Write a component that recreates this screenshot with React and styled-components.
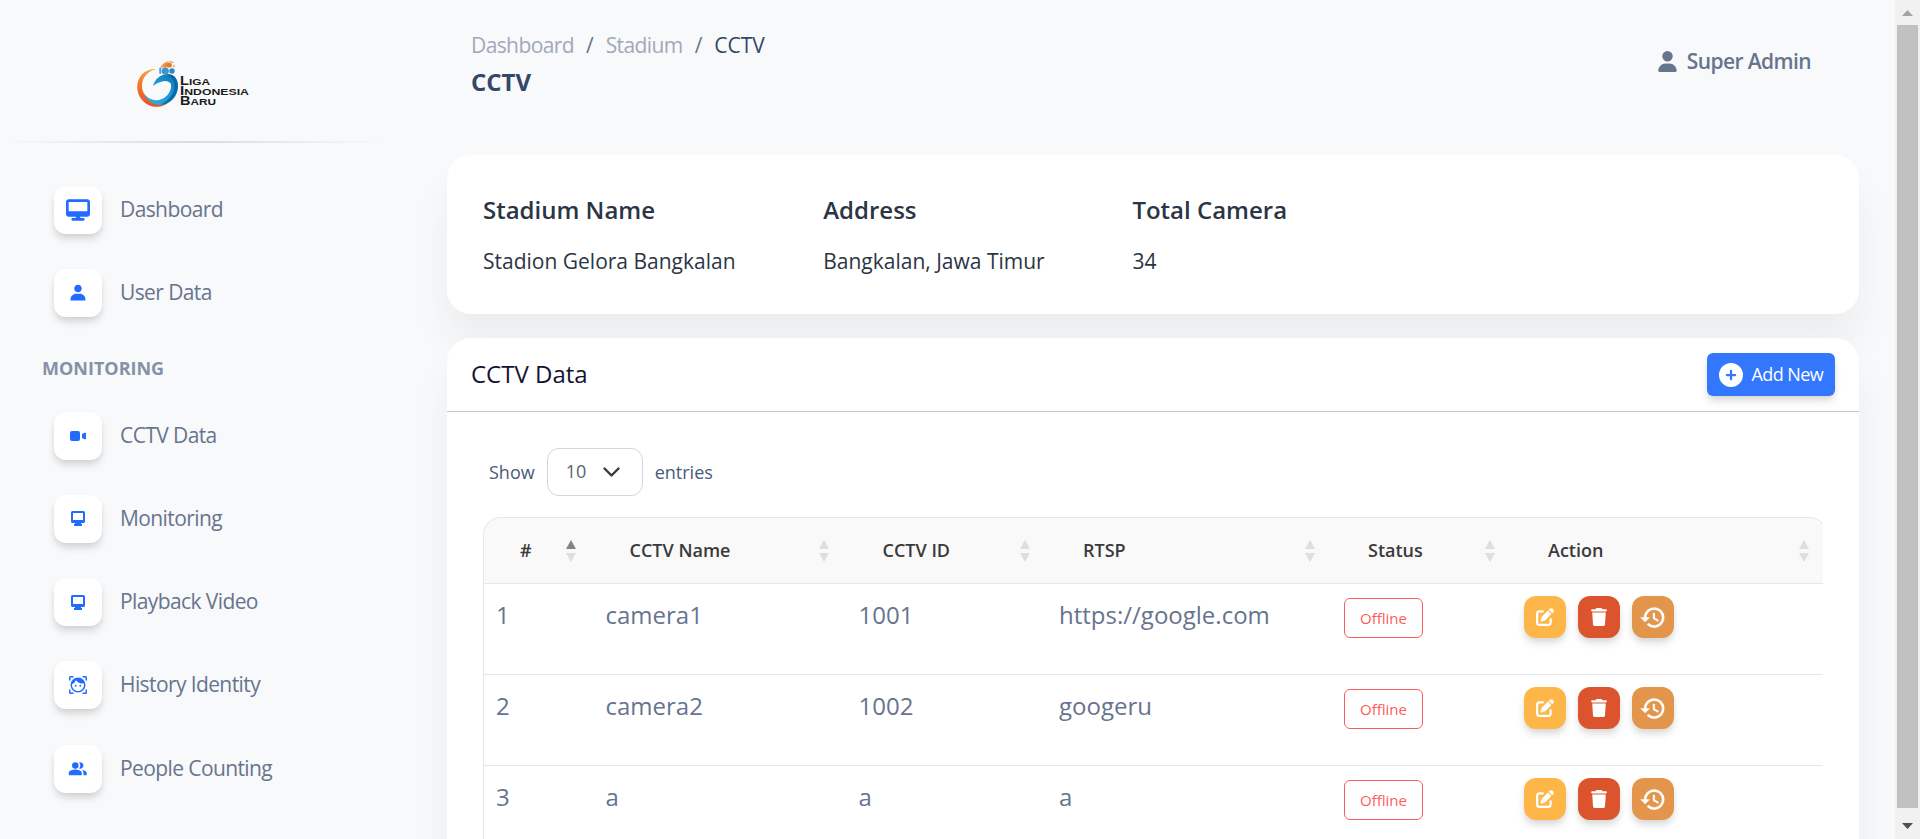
import React from "react";
import styled, { createGlobalStyle } from "styled-components";
import { FaDesktop, FaUser, FaCirclePlus, FaPenToSquare, FaTrash } from "react-icons/fa6";
import { BiSolidUser } from "react-icons/bi";
import { MdPeopleAlt } from "react-icons/md";

const Global = createGlobalStyle`
  *, *::before, *::after { box-sizing: border-box; }
  body {
    margin: 0;
    overflow: hidden;
    background: #f8f9fb;
    font-family: "Open Sans", "Liberation Sans", sans-serif;
    color: #67748e;
  }
`;

const Screen = styled.div`
  display: flex;
  height: 839px;
  overflow: hidden;
`;

const Sidebar = styled.aside`
  width: 399px;
  flex: none;
`;

const Brand = styled.div`
  display: flex;
  padding: 60px 0 0 136px;
  height: 141px;
`;

const Divider = styled.div`
  height: 2px;
  width: 387px;
  background: linear-gradient(90deg, transparent, rgba(0, 0, 0, 0.12), transparent);
`;

const Nav = styled.nav`
  padding: 43px 0 0 54px;
  display: flex;
  flex-direction: column;
  gap: 35.25px;
`;

const NavItem = styled.a`
  display: flex;
  align-items: center;
  gap: 18px;
  height: 48px;
  font-size: 21px;
  line-height: 46px;
  letter-spacing: -0.6px;
  color: #67748e;
`;

const NavLabel = styled.span`
  height: 48px;
`;

const Tile = styled.span`
  width: 48px;
  height: 48px;
  flex: none;
  border-radius: 12px;
  background: #fff;
  color: #216bff;
  display: flex;
  align-items: center;
  justify-content: center;
  box-shadow: 0 6px 9px -1px rgba(20, 20, 20, 0.12), 0 3px 6px -1px rgba(20, 20, 20, 0.07);
  svg { display: block; }
`;

const SectionTitle = styled.h6`
  margin: 3px 0 -3.1px -12px;
  height: 24px;
  font-size: 18px;
  line-height: 24px;
  font-weight: 700;
  color: #8591a6;
`;

const Main = styled.main`
  flex: 1;
  padding: 0 36px 0 48px;
  display: flex;
  flex-direction: column;
`;

const Topbar = styled.header`
  display: flex;
  justify-content: space-between;
  height: 155px;
  padding: 30px 48px 0 24px;
  flex: none;
`;

const Crumbs = styled.div`
  display: flex;
  gap: 12px;
  font-size: 21px;
  line-height: 31px;
  color: #344767;
`;

const Crumb = styled.span`
  letter-spacing: ${(p) => (p.$current ? "0" : "-0.6px")};
  color: ${(p) => (p.$current ? "#344767" : "#a0a9b9")};
`;

const Slash = styled.span`
  color: #67748e;
`;

const PageTitle = styled.h1`
  margin: 4px 0 0;
  font-size: 24px;
  line-height: 33px;
  font-weight: 700;
  color: #344767;
`;

const Account = styled.div`
  display: flex;
  align-items: center;
  gap: 9px;
  height: 62px;
  font-size: 21px;
  font-weight: 600;
  letter-spacing: -0.6px;
  color: #67748e;
`;

const Card = styled.section`
  background: #fff;
  border-radius: ${(p) => (p.$open ? "24px 24px 0 0" : "24px")};
  box-shadow: 0 30px 40.5px rgba(0, 0, 0, 0.05);
  flex: none;
`;

const Facts = styled(Card)`
  display: flex;
  gap: 87.7px;
  height: 159px;
  padding: 36px;
  margin-bottom: 24px;
  color: #2b3544;
`;

const FactName = styled.h5`
  margin: 2px 0 17px;
  font-size: 24px;
  line-height: 33px;
  font-weight: 600;
`;

const FactValue = styled.p`
  margin: 0;
  font-size: 21px;
  line-height: 36px;
`;

const DataCard = styled(Card)`
  height: 540px;
`;

const CardHead = styled.div`
  height: 74px;
  border-bottom: 1px solid #c4c6c9;
  display: flex;
  align-items: flex-start;
  justify-content: space-between;
  padding: 15px 24px 0;
  font-size: 24px;
  line-height: 41px;
  color: #141432;
`;

const AddButton = styled.button`
  display: flex;
  align-items: center;
  gap: 8.5px;
  width: 128px;
  height: 43px;
  padding: 0 0 0 12px;
  border: 0;
  border-radius: 6px;
  background: #3377ff;
  color: #fff;
  font: 400 18px "Open Sans", sans-serif;
  letter-spacing: -0.6px;
  white-space: nowrap;
  box-shadow: 0 6px 9px -1px rgba(20, 20, 20, 0.12), 0 3px 6px -1px rgba(20, 20, 20, 0.07);
`;

const AddLabel = styled.span`
  padding-bottom: 2px;
`;

const Length = styled.label`
  display: flex;
  align-items: center;
  gap: 12px;
  padding: 36px 0 21px 42px;
  font-size: 18px;
  line-height: 48px;
  color: #4a5a7a;
`;

const Select = styled.span`
  width: 96px;
  height: 48px;
  border: 1px solid #d2d6da;
  border-radius: 12px;
  display: flex;
  align-items: center;
  justify-content: space-between;
  padding: 0 22px 2px 18px;
  color: #5c6370;
  svg { margin-top: 2px; }
`;

const TableFrame = styled.div`
  margin-left: 36px;
  width: 1340px;
  overflow: hidden;
`;

const Table = styled.div`
  width: 1344px;
  border: 1px solid #e3e7eb;
  border-bottom: 0;
  border-radius: 18px 18px 0 0;
  overflow: hidden;
`;

const Row = styled.div`
  display: grid;
  grid-template-columns: 109.5px 253px 200.5px 285px 180px 314px;
  height: ${(p) => (p.$head ? 66 : 91)}px;
  border-bottom: 1px solid #e3e7eb;
  background: ${(p) => (p.$head ? "#f9f9f9" : "#fff")};
`;

const HeadCell = styled.div`
  display: flex;
  align-items: center;
  justify-content: space-between;
  padding: 0 17.5px 0 36px;
  font-size: 18px;
  font-weight: 600;
  color: #3a3a3a;
`;

const HeadLabel = styled.span`
  padding-bottom: 2px;
`;

const Cell = styled.div`
  padding: 12px 12px 0;
  font-size: 24px;
  line-height: 38px;
  color: #67748e;
`;

const Badge = styled.span`
  display: block;
  width: 79px;
  height: 40px;
  margin-top: 2px;
  border: 1px solid #fd5c5e;
  border-radius: 6px;
  color: #fd5c5e;
  font-size: 15px;
  line-height: 39px;
  text-align: center;
`;

const Actions = styled.div`
  display: flex;
  gap: 12px;
`;

const ActionButton = styled.button`
  width: 42px;
  height: 42px;
  padding: 0;
  border: 0;
  border-radius: 12px;
  background: ${(p) => p.$color};
  color: #fff;
  display: flex;
  align-items: center;
  justify-content: center;
  box-shadow: 0 6px 9px -1px rgba(20, 20, 20, 0.12), 0 3px 6px -1px rgba(20, 20, 20, 0.07);
`;

const Scrollbar = styled.div`
  width: 25px;
  flex: none;
  background: #f1f1f1;
  display: flex;
  flex-direction: column;
  align-items: center;
`;

const ScrollArrow = styled.div`
  height: ${(p) => p.$h}px;
  padding-top: ${(p) => p.$pad}px;
  display: flex;
  align-items: center;
`;

const Thumb = styled.div`
  width: 21px;
  flex: 1;
  background: #c1c1c1;
`;

const Logo = () => (
  <svg width="116" height="49" viewBox="0 0 116 49">
    <defs>
      <linearGradient id="orange" x1="0" y1="0" x2="0" y2="1">
        <stop offset="0" stopColor="#f7a04a" />
        <stop offset="0.5" stopColor="#f0702c" />
        <stop offset="1" stopColor="#e8512a" />
      </linearGradient>
      <linearGradient id="blue" x1="0" y1="1" x2="1" y2="0">
        <stop offset="0" stopColor="#35b0e5" />
        <stop offset="0.55" stopColor="#1a9ad6" />
        <stop offset="1" stopColor="#0f6cab" />
      </linearGradient>
    </defs>
    <path d="M20 9C8 9 1.300 17 1.300 27C1.300 38 10 46.800 21 46.800C26 46.800 30 45 33 42C17 44 6 37 6 26C6 17 12 11 20 9Z" fill="url(#orange)" />
    <path d="M17 26C19 18 27 12.500 35 14.500C40 16 42 21 42 26C42 36 35 44 25 45C17 45 10 40 8 34C12 39 18 41 23 40C31 38 36 31 35 24C32 18.500 23 21 17 26Z" fill="url(#blue)" />
    <path d="M36 15C41 18 42 23 41.700 28C40 38 33 44 25 44.700C33 40 38.500 34 38.500 26C38.500 21 37 18 32 16Z" fill="#0b68a8" />
    <path d="M24.500 8C25.500 4.500 29 1.800 33 1.300L31 4L27 7.500Z" fill="#f19a4f" />
    <circle cx="29.500" cy="5.500" r="2.200" fill="#ef8b3c" />
    <circle cx="33.300" cy="5" r="2.600" fill="#e97a2c" />
    <path d="M33 1.500C35.500 1 37.500 1.500 38.500 3L35 2.500ZM36.500 7L38.500 4L38.500 7.500Z" fill="#f19a4f" />
    <rect x="23.300" y="7.500" width="2" height="6.500" rx="1" fill="#4d9fd0" />
    <circle cx="29.300" cy="11" r="3.600" fill="#3d93ca" />
    <circle cx="36" cy="11" r="2.700" fill="#2b88c4" />
    <g fill="#1c1a19" fontFamily="'Liberation Sans', sans-serif" fontWeight="700">
      <text x="44" y="25" fontSize="12" textLength="30" lengthAdjust="spacingAndGlyphs">L<tspan fontSize="9.800">IGA</tspan></text>
      <text x="44" y="35" fontSize="12" textLength="69" lengthAdjust="spacingAndGlyphs">I<tspan fontSize="9.800">NDONESIA</tspan></text>
      <text x="44" y="45" fontSize="12" textLength="36" lengthAdjust="spacingAndGlyphs">B<tspan fontSize="9.800">ARU</tspan></text>
    </g>
  </svg>
);

const VideoIcon = () => (
  <svg width="16" height="10" viewBox="0 0 16 10" fill="currentColor">
    <rect width="10" height="10" rx="2" />
    <path d="M12 3L14.500 1.800H15.400A.6.6 0 0 1 16 2.400V7.600A.6.6 0 0 1 15.400 8.200H14.500L12 7Z" />
  </svg>
);

const MonitorIcon = () => (
  <svg width="14" height="15" viewBox="0 0 14 15" fill="currentColor">
    <path fillRule="evenodd" d="M1.500 0H12.500A1.500 1.500 0 0 1 14 1.500V10.500A1.500 1.500 0 0 1 12.500 12H10V13H11V15H3V13H4V12H1.500A1.500 1.500 0 0 1 0 10.500V1.500A1.500 1.500 0 0 1 1.500 0ZM2 2V9H12V2Z" />
  </svg>
);

const FaceIcon = () => (
  <svg width="18" height="18" viewBox="0 0 24 24" fill="currentColor">
    <path d="M0 6V2A2 2 0 0 1 2 0H6V2H2V6ZM18 0H22A2 2 0 0 1 24 2V6H22V2H18ZM24 18V22A2 2 0 0 1 22 24H18V22H22V18ZM6 24H2A2 2 0 0 1 0 22V18H2V22H6Z" />
    <path d="M9 11.750A1.250 1.250 0 0 0 7.750 13A1.250 1.250 0 0 0 9 14.250A1.250 1.250 0 0 0 10.250 13A1.250 1.250 0 0 0 9 11.750M15 11.750A1.250 1.250 0 0 0 13.750 13A1.250 1.250 0 0 0 15 14.250A1.250 1.250 0 0 0 16.250 13A1.250 1.250 0 0 0 15 11.750M12 2A10 10 0 0 0 2 12A10 10 0 0 0 12 22A10 10 0 0 0 22 12A10 10 0 0 0 12 2M12 20C7.590 20 4 16.410 4 12C4 11.710 4 11.420 4.050 11.140C6.410 10.090 8.280 8.160 9.260 5.770C11.070 8.330 14.050 10 17.420 10C18.200 10 18.950 9.910 19.670 9.740C19.880 10.450 20 11.210 20 12C20 16.410 16.410 20 12 20Z" />
  </svg>
);

const HistoryIcon = () => (
  <svg width="27" height="27" viewBox="0.400 0 24 24" fill="currentColor" stroke="currentColor" strokeWidth="0.350">
    <path d="M13 3a9 9 0 0 0-9 9H1l3.890 3.890.070.140L9 12H6c0-3.870 3.130-7 7-7s7 3.130 7 7-3.130 7-7 7c-1.930 0-3.680-.790-4.940-2.060l-1.420 1.420A8.954 8.954 0 0 0 13 21a9 9 0 0 0 0-18zm-1 5v5l4.280 2.540.720-1.210-3.500-2.080V8H12z" />
  </svg>
);

const SortIcon = ({ active }) => (
  <svg width="10" height="22" viewBox="0 0 10 22">
    <path d="M0 9L5 0L10 9Z" fill={active ? "#858585" : "#dedede"} />
    <path d="M0 13H10L5 22Z" fill="#dedede" />
  </svg>
);

const topItems = [
  ["Dashboard", <FaDesktop size={24} />],
  ["User Data", <BiSolidUser size={20} />],
];
const monitoringItems = [
  ["CCTV Data", <VideoIcon />],
  ["Monitoring", <MonitorIcon />],
  ["Playback Video", <MonitorIcon />],
  ["History Identity", <FaceIcon />],
  ["People Counting", <MdPeopleAlt size={19.5} />],
];
const facts = [
  ["Stadium Name", "Stadion Gelora Bangkalan"],
  ["Address", "Bangkalan, Jawa Timur"],
  ["Total Camera", "34"],
];
const columns = ["#", "CCTV Name", "CCTV ID", "RTSP", "Status", "Action"];
const cameras = [
  ["1", "camera1", "1001", "https://google.com"],
  ["2", "camera2", "1002", "googeru"],
  ["3", "a", "a", "a"],
];

const NavLink = ([label, icon]) => (
  <NavItem key={label}>
    <Tile>{icon}</Tile>
    <NavLabel>{label}</NavLabel>
  </NavItem>
);

export default function App() {
  return (
    <Screen>
      <Global />
      <Sidebar>
        <Brand><Logo /></Brand>
        <Divider />
        <Nav>
          {topItems.map(NavLink)}
          <SectionTitle>MONITORING</SectionTitle>
          {monitoringItems.map(NavLink)}
        </Nav>
      </Sidebar>
      <Main>
        <Topbar>
          <div>
            <Crumbs>
              <Crumb>Dashboard</Crumb>
              <Slash>/</Slash>
              <Crumb>Stadium</Crumb>
              <Slash>/</Slash>
              <Crumb $current>CCTV</Crumb>
            </Crumbs>
            <PageTitle>CCTV</PageTitle>
          </div>
          <Account><FaUser size={21} />Super Admin</Account>
        </Topbar>
        <Facts>
          {facts.map(([name, value]) => (
            <div key={name}>
              <FactName>{name}</FactName>
              <FactValue>{value}</FactValue>
            </div>
          ))}
        </Facts>
        <DataCard $open>
          <CardHead>
            CCTV Data
            <AddButton><FaCirclePlus size={24} /><AddLabel>Add New</AddLabel></AddButton>
          </CardHead>
          <Length>
            Show
            <Select>
              10
              <svg width="17" height="10" viewBox="0 0 17 10" fill="none" stroke="#343a40" strokeWidth="2.400" strokeLinecap="round" strokeLinejoin="round">
                <path d="M1.500 1.500L8.500 8.500L15.500 1.500" />
              </svg>
            </Select>
            entries
          </Length>
          <TableFrame>
            <Table>
              <Row $head>
                {columns.map((name, i) => (
                  <HeadCell key={name}><HeadLabel>{name}</HeadLabel><SortIcon active={i === 0} /></HeadCell>
                ))}
              </Row>
              {cameras.map((camera) => (
                <Row key={camera[0]}>
                  {camera.map((value, i) => <Cell key={i}>{value}</Cell>)}
                  <Cell><Badge>Offline</Badge></Cell>
                  <Cell>
                    <Actions>
                      <ActionButton $color="#ffb648"><FaPenToSquare size={18} /></ActionButton>
                      <ActionButton $color="#db542d"><FaTrash size={18} /></ActionButton>
                      <ActionButton $color="#e2954b"><HistoryIcon /></ActionButton>
                    </Actions>
                  </Cell>
                </Row>
              ))}
            </Table>
          </TableFrame>
        </DataCard>
      </Main>
      <Scrollbar>
        <ScrollArrow $h={25} $pad={1}>
          <svg width="11" height="6" viewBox="0 0 11 6"><path d="M0 6L5.500 0L11 6Z" fill="#a3a3a3" /></svg>
        </ScrollArrow>
        <Thumb />
        <ScrollArrow $h={31} $pad={5}>
          <svg width="11" height="6" viewBox="0 0 11 6"><path d="M0 0H11L5.500 6Z" fill="#505050" /></svg>
        </ScrollArrow>
      </Scrollbar>
    </Screen>
  );
}
